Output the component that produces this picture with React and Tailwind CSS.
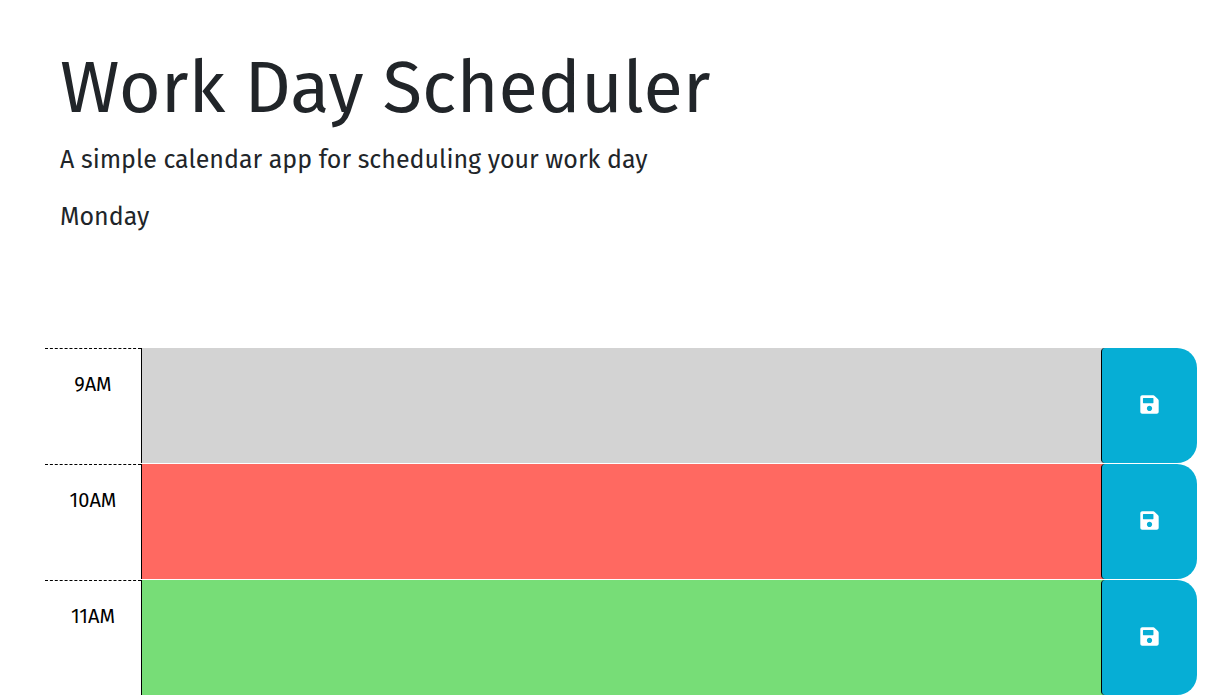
import { FaSave } from "react-icons/fa";

const hours = [
  { label: "9AM", color: "bg-[#d3d3d3]" },
  { label: "10AM", color: "bg-[#ff6961]" },
  { label: "11AM", color: "bg-[#77dd77]" },
];

export default function App() {
  return (
    <div className="bg-white font-['Fira_Sans','Noto_Sans',sans-serif] text-[#212529]">
      <header className="px-[60px] pt-[45px]">
        <h1 className="text-7xl leading-[86px]">Work Day Scheduler</h1>
        <p className="mt-[11px] text-[25px] leading-9">A simple calendar app for scheduling your work day</p>
        <p className="mt-[21px] text-[25px] leading-9">Monday</p>
      </header>
      <main className="mt-[113px] pr-[13px] pl-[45px]">
        {hours.map(({ label, color }) => (
          <div key={label} className="flex h-[116px] border-b border-white">
            <label htmlFor={label} className="w-24 shrink-0 border-t border-dashed border-black pt-5 text-center text-xl leading-[30px] text-black">
              {label}
            </label>
            <textarea id={label} className={`-mr-1 min-w-0 flex-1 resize-none border-l border-black outline-none ${color}`} />
            <button aria-label={`Save ${label}`} className="flex w-24 shrink-0 items-center justify-center rounded-l-[4px] rounded-r-[20px] border-l border-black bg-[#06aed5] pb-[2px] text-white">
              <FaSave className="size-[21px]" />
            </button>
          </div>
        ))}
      </main>
    </div>
  );
}
